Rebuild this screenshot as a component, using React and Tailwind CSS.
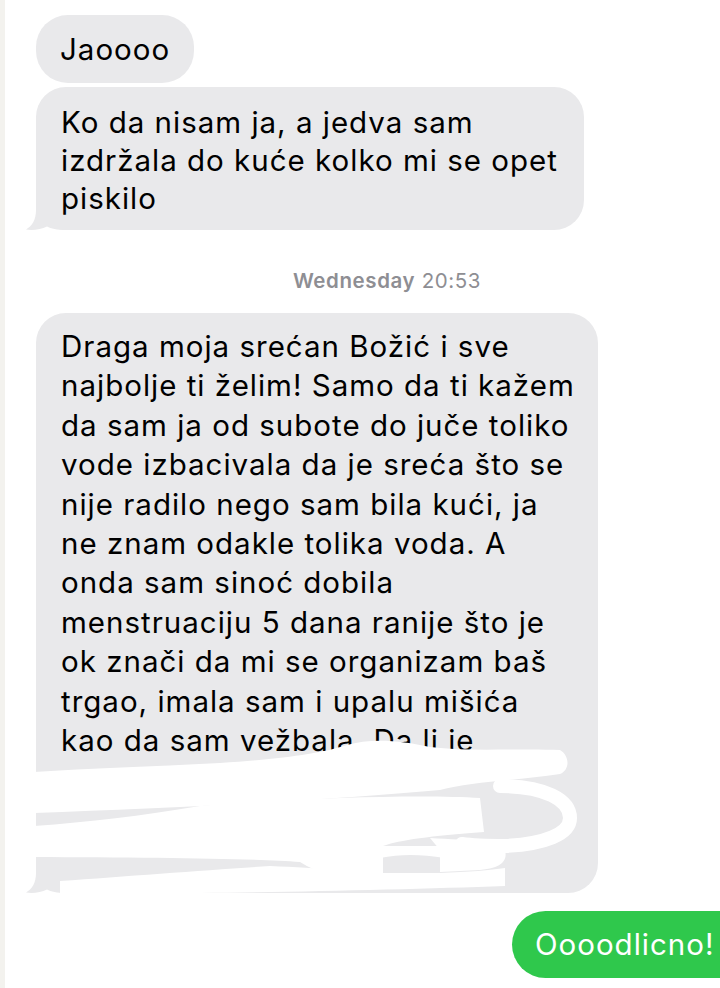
import React from "react";

const firstLines = [
  "Ko da nisam ja, a jedva sam",
  "izdržala do kuće kolko mi se opet",
  "piskilo",
];

const longLines = [
  "Draga moja srećan Božić i sve",
  "najbolje ti želim! Samo da ti kažem",
  "da sam ja od subote do juče toliko",
  "vode izbacivala da je sreća što se",
  "nije radilo nego sam bila kući, ja",
  "ne znam odakle tolika voda. A",
  "onda sam sinoć dobila",
  "menstruaciju 5 dana ranije što je",
  "ok znači da mi se organizam baš",
  "trgao, imala sam i upalu mišića",
  "kao da sam vežbala. Da li je",
  "\u00a0",
  "\u00a0",
  "\u00a0",
];

function Tail() {
  return (
    <svg
      className="absolute left-[-10px] bottom-0"
      width="40"
      height="30"
      viewBox="0 0 40 30"
    >
      <path
        d="M10 0 L10 10 C10 20 6 26 0 29.5 C7 30.5 15 29.5 21 26.5 C25 28.5 31 30 40 30 L40 0 Z"
        fill="#e9e9eb"
      />
    </svg>
  );
}

// white marker scribble drawn over the end of the long message
function Scribble() {
  return (
    <svg
      className="absolute left-[-36px] top-[417px] pointer-events-none"
      width="620"
      height="185"
      viewBox="0 730 620 185"
    >
      <g fill="#ffffff">
        {/* top band */}
        <path d="M34 772 C90 768 150 767 220 763 C280 759 320 754 347 745 C370 738 400 740 430 747 C470 752 520 748 560 750 C570 756 570 770 560 774 C520 780 470 782 440 790 C330 800 180 808 34 813 Z" />
        {/* middle band */}
        <path d="M34 826 C90 822 140 816 200 806 C300 798 420 794 480 798 L484 832 C430 836 400 840 383 846 L383 877 C350 878 320 876 300 862 C250 858 150 858 34 857 Z" />
        <path d="M430 838 C470 840 500 842 505 850 C508 862 500 868 480 870 L440 872 L440 850 Z" />
        <path d="M380 846 L445 846 L445 858 C420 854 400 854 380 858 Z" />
        {/* bottom stroke */}
        <path d="M60 881 C130 876 210 870 270 866 C320 868 360 872 383 873 L440 873 C470 872 490 870 505 868 L505 886 C420 889 300 892 200 893 C130 894 80 894 60 894 Z" />
      </g>
      <path
        d="M500 786 C545 786 570 800 570 818 C570 834 545 844 505 846 C490 846 475 846 462 844"
        fill="none"
        stroke="#ffffff"
        strokeWidth="14"
        strokeLinecap="round"
      />
    </svg>
  );
}

export default function App() {
  return (
    <div className="w-[720px] h-[988px] overflow-hidden bg-white flex font-['Inter','Liberation_Sans',sans-serif] text-[29.5px] tracking-[1px] text-black">
      <div className="w-[5px] shrink-0 bg-[#f3f2ee]" />

      <div className="flex-1 flex flex-col pl-[31px] pt-[15px] min-w-0">
        {/* incoming */}
        <div className="self-start rounded-[32px] bg-[#e9e9eb] px-[24px] py-[15px] leading-[38px]">
          Jaoooo
        </div>

        <div className="relative self-start mt-[4px] w-[548px] rounded-[30px] bg-[#e9e9eb] pl-[25px] pr-[20px] pt-[16px] pb-[13px] leading-[38px]">
          <Tail />
          <div className="relative">
            {firstLines.map((l, i) => (
              <div key={i} className="whitespace-nowrap">
                {l}
              </div>
            ))}
          </div>
        </div>

        {/* date divider */}
        <div className="mt-[39px] text-center pl-[18px] text-[20.5px] tracking-[0.6px] leading-[24px] text-[#8e8e93]">
          <span className="font-semibold">Wednesday</span> 20:53
        </div>

        <div className="relative self-start mt-[20px] w-[562px] rounded-[30px] bg-[#e9e9eb] pl-[25px] pr-[20px] pt-[14px] pb-[14px] leading-[39.4px]">
          <Tail />
          <div className="relative">
            {longLines.map((l, i) => (
              <div key={i} className="whitespace-nowrap">
                {l}
              </div>
            ))}
          </div>
          <Scribble />
        </div>

        {/* outgoing */}
        <div className="mt-[18px] ml-[476px] shrink-0 self-start whitespace-nowrap rounded-[34px] bg-[#2fc84c] pl-[23px] pr-[40px] py-[14.5px] leading-[38px] text-white">
          Oooodlicno!
        </div>
      </div>
    </div>
  );
}
